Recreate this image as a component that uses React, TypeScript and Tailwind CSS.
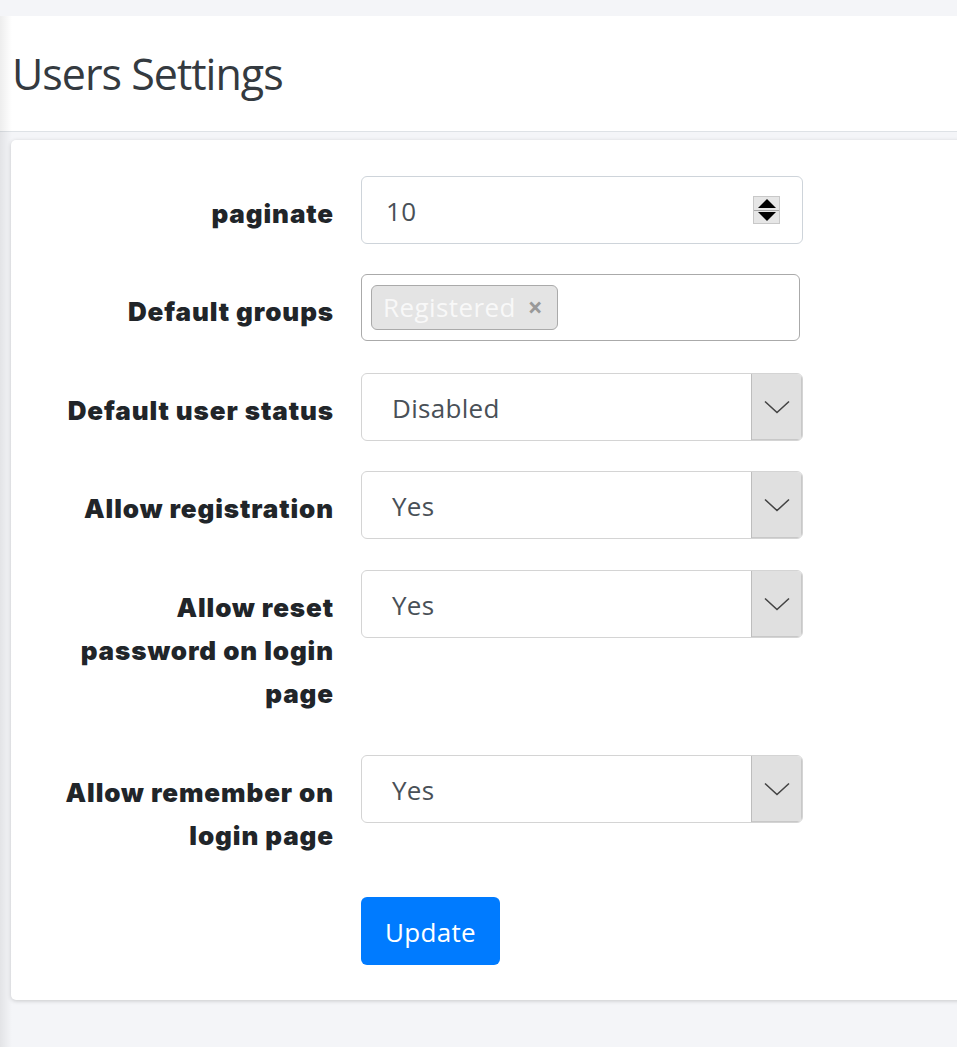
import React from "react";

const labelCls =
  "text-right text-[26px] tracking-[0.9px] leading-[43px] pt-[16px] pb-[9px] font-black text-[#212529] [font-family:Inter,'Noto_Sans',sans-serif]";

function Chevron() {
  return (
    <svg width="26" height="14" viewBox="0 0 26 14" fill="none">
      <path d="M1 1.5 L13 12.5 L25 1.5" stroke="#444" strokeWidth="1.6" />
    </svg>
  );
}

function SelectBox({ value }: { value: string }) {
  return (
    <div className="flex h-[68px] w-[442px] rounded-[6px] border border-[#d4d4d4] bg-white overflow-hidden">
      <div className="flex-1 flex items-center pl-[30px] pt-[2px] text-[26px] tracking-[0.3px] text-[#495057]">{value}</div>
      <div className="w-[51px] flex items-center justify-center bg-[#e0e0e0] border-l border-[#bdbdbd] shadow-[inset_-1px_-1px_0_#c8c8c8]">
        <Chevron />
      </div>
    </div>
  );
}

function Row({ label, children, mb = "mb-[30px]" }: { label: React.ReactNode; children: React.ReactNode; mb?: string }) {
  return (
    <div className={"flex items-start gap-[27px] " + mb}>
      <div className={"w-[323px] " + labelCls}>{label}</div>
      <div>{children}</div>
    </div>
  );
}

export default function App() {
  return (
    <div className="relative min-h-[1047px] bg-[#f4f5f8] [font-family:'Open_Sans','Noto_Sans',sans-serif] overflow-hidden">
      <div className="pointer-events-none absolute left-0 top-[16px] bottom-0 w-[12px] bg-gradient-to-r from-[rgba(0,0,0,0.07)] to-transparent z-10" />
      <div className="h-[16px]" />
      <div className="h-[116px] bg-white border-b border-[#dee2e6] flex items-center pl-[12px]">
        <h1 className="text-[43px] tracking-[-1px] text-[#343a40] leading-none mt-[-1px]">Users Settings</h1>
      </div>
      <div className="h-[8px]" />
      <div className="ml-[11px] w-[960px] h-[860px] bg-white rounded-[5px] shadow-[0_1px_4px_rgba(0,0,0,0.18)] pt-[36px]">
        <Row label="paginate">
          <div className="flex items-center h-[68px] w-[442px] rounded-[6px] border border-[#ced4da] bg-white pl-[24px] pr-[22px]">
            <span className="flex-1 text-[26px] tracking-[0.3px] text-[#495057] mt-[2px]">10</span>
            <div className="flex flex-col w-[27px] h-[28px] border border-[#c8c8c8] bg-[#e6e6e6]">
              <div className="flex-1 flex items-center justify-center border-b border-[#a8a8a8]">
                <svg width="18" height="9" viewBox="0 0 18 9"><path d="M9 0 L18 9 L0 9 Z" fill="#000" /></svg>
              </div>
              <div className="flex-1 flex items-center justify-center">
                <svg width="18" height="9" viewBox="0 0 18 9"><path d="M0 0 L18 0 L9 9 Z" fill="#000" /></svg>
              </div>
            </div>
          </div>
        </Row>
        <div className="flex items-start gap-[27px] mb-[31px]">
          <div className={"w-[323px] " + labelCls}>Default groups</div>
          <div className="flex items-center h-[67px] w-[439px] rounded-[6px] border border-[#aaaaaa] bg-white pl-[9px]">
            <div className="flex items-center h-[45px] rounded-[6px] border border-[#aaaaaa] bg-[#e4e4e4] pl-[11px] pr-[14px] gap-[12px]">
              <span className="text-[26px] tracking-[0.4px] text-[#f8f8f8]">Registered</span>
              <span className="text-[26px] font-bold text-[#999]">×</span>
            </div>
          </div>
        </div>
        <Row label="Default user status">
          <SelectBox value="Disabled" />
        </Row>
        <Row label="Allow registration" mb="mb-[31px]">
          <SelectBox value="Yes" />
        </Row>
        <Row label={<>Allow reset<br />password on login<br />page</>} mb="mb-[31px]">
          <SelectBox value="Yes" />
        </Row>
        <Row label={<>Allow remember on<br />login page</>} mb="mb-[31px]">
          <SelectBox value="Yes" />
        </Row>
        <div className="flex gap-[27px]">
          <div className="w-[323px]" />
          <button className="h-[68px] w-[139px] rounded-[6px] bg-[#007bff] text-white text-[26px] tracking-[0.3px] pt-[2px]">Update</button>
        </div>
      </div>
    </div>
  );
}
